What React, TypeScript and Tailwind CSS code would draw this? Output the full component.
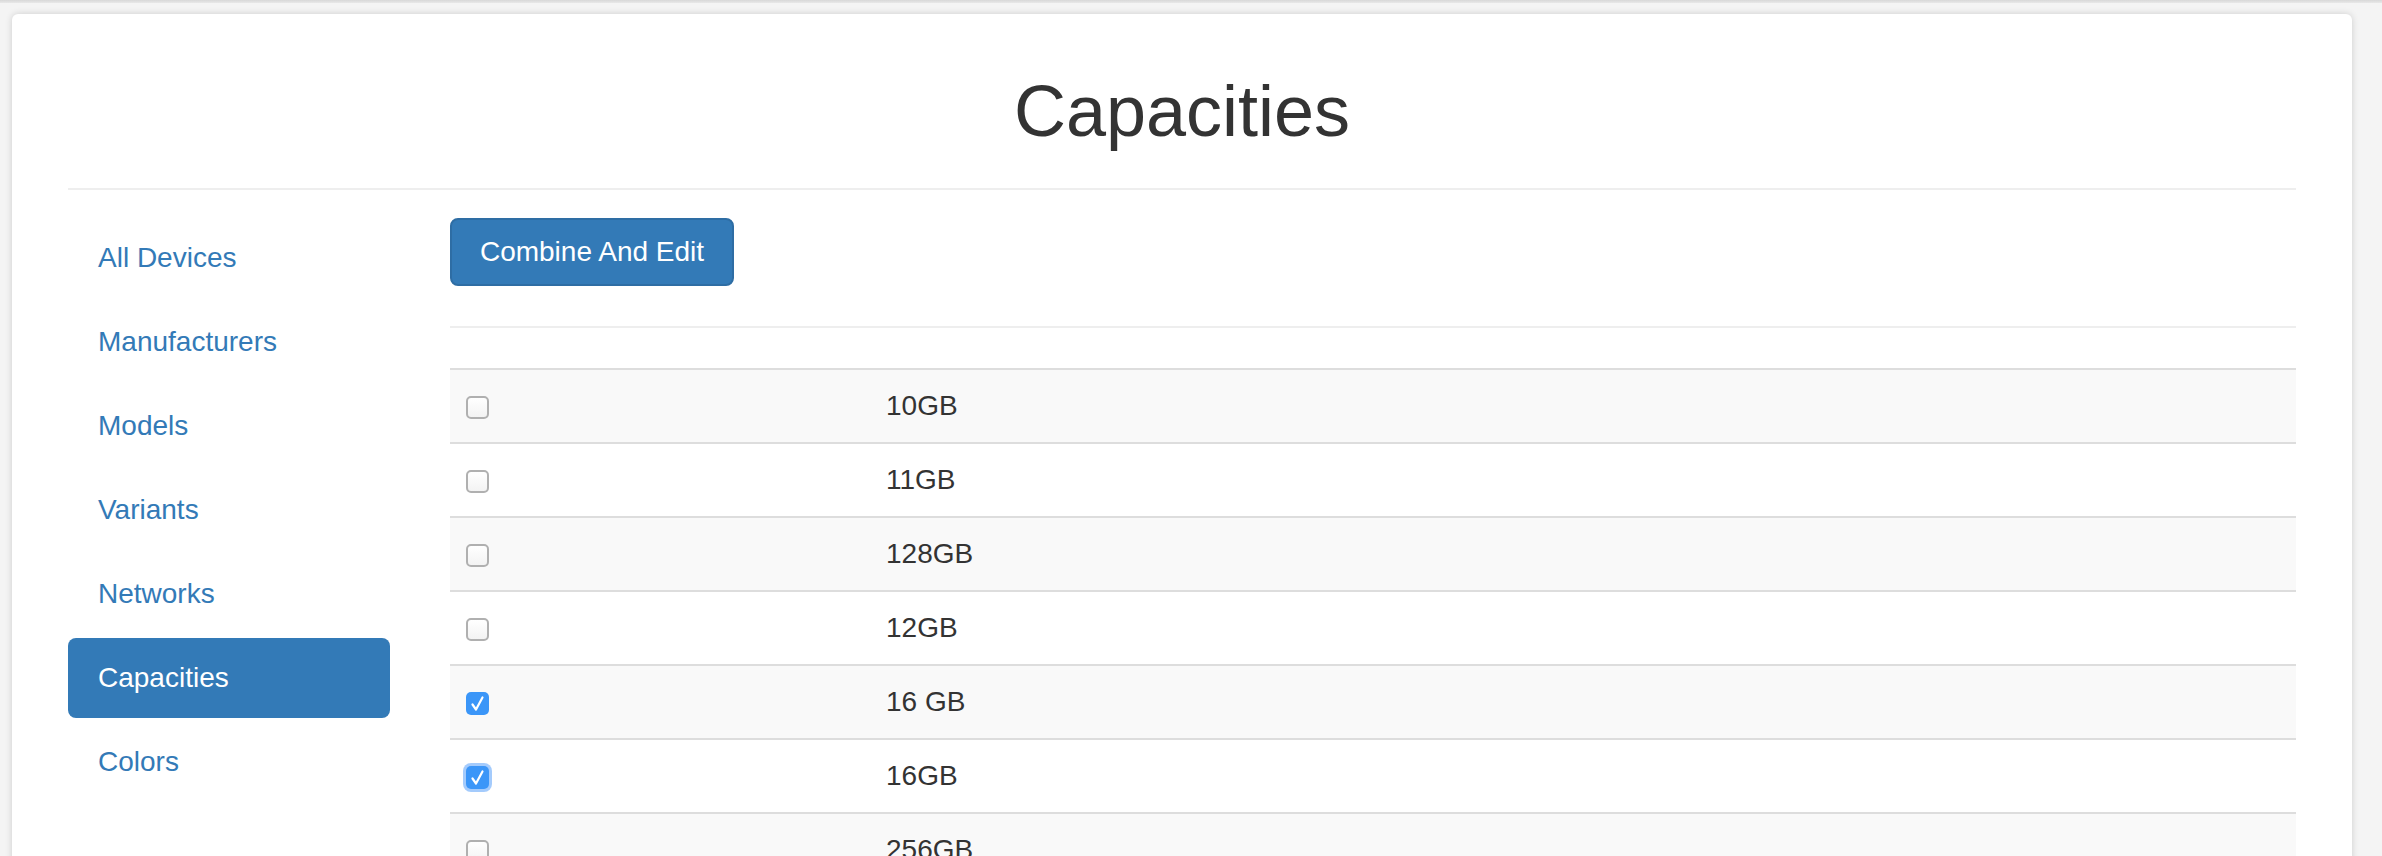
import React from "react";

const navItems = [
  "All Devices",
  "Manufacturers",
  "Models",
  "Variants",
  "Networks",
  "Capacities",
  "Colors",
];

type Row = { label: string; checked: boolean; focus?: boolean };

const rows: Row[] = [
  { label: "10GB", checked: false },
  { label: "11GB", checked: false },
  { label: "128GB", checked: false },
  { label: "12GB", checked: false },
  { label: "16 GB", checked: true },
  { label: "16GB", checked: true, focus: true },
  { label: "256GB", checked: false },
];

function Checkbox({ checked, focus }: { checked: boolean; focus?: boolean }) {
  if (checked) {
    return (
      <span
        className={
          focus
            ? "flex h-[23px] w-[23px] items-center justify-center rounded-[5px] bg-[#3b96f8] shadow-[0_0_0_3px_rgba(90,160,250,0.55)]"
            : "flex h-[23px] w-[23px] items-center justify-center rounded-[5px] bg-[#3b96f8]"
        }
      >
        <svg width="23" height="23" viewBox="0 0 23 23">
          <path
            d="M6.5 12.5 L10 17.5 L16.5 5.5"
            stroke="white"
            strokeWidth="2.2"
            fill="none"
            strokeLinecap="round"
            strokeLinejoin="round"
          />
        </svg>
      </span>
    );
  }
  return (
    <span className="block h-[23px] w-[23px] rounded-[5px] border-2 border-[#b0b0b0] bg-gradient-to-b from-white to-[#f3f3f3]" />
  );
}

export default function App() {
  return (
    <div className="h-[856px] overflow-hidden bg-[#f4f4f4] font-['Liberation_Sans',Arial,sans-serif]">
      <div className="h-[3px] bg-gradient-to-b from-[#d8d8d8] to-[#e8e8e8]" />
      <div className="pl-[12px] pr-[30px] pt-[11px]">
        <div className="min-h-[900px] rounded-[6px] bg-white px-[56px] pt-[58px] shadow-[0_0_7px_rgba(0,0,0,0.16)]">
          <h1 className="text-center text-[72px] font-normal leading-[79px] text-[#333333]">
            Capacities
          </h1>
          <div className="mt-[37px] h-[2px] bg-[#eeeeee]" />
          <div className="mt-[28px] flex gap-[60px]">
            <nav className="flex w-[322px] shrink-0 flex-col gap-[4px]">
              {navItems.map((item) =>
                item === "Capacities" ? (
                  <div
                    key={item}
                    className="flex h-[80px] items-center rounded-[8px] bg-[#337ab7] px-[30px] text-[28px] leading-[40px] text-white"
                  >
                    {item}
                  </div>
                ) : (
                  <div
                    key={item}
                    className="flex h-[80px] items-center rounded-[8px] px-[30px] text-[28px] leading-[40px] text-[#337ab7]"
                  >
                    {item}
                  </div>
                )
              )}
            </nav>
            <div className="min-w-0 flex-1">
              <button className="flex h-[68px] w-[284px] items-center justify-center rounded-[8px] border-2 border-[#2e6da4] bg-[#337ab7] text-[28px] leading-[40px] text-white">
                Combine And Edit
              </button>
              <div className="mt-[40px] h-[2px] bg-[#eeeeee]" />
              <div className="mt-[40px]">
                {rows.map((r, i) => (
                  <div
                    key={r.label}
                    className={
                      i % 2 === 0
                        ? "flex h-[74px] border-t-2 border-[#dddddd] bg-[#f9f9f9]"
                        : "flex h-[74px] border-t-2 border-[#dddddd] bg-white"
                    }
                  >
                    <div className="flex w-[420px] shrink-0 items-center pl-[16px] pt-[3px]">
                      <Checkbox checked={r.checked} focus={r.focus} />
                    </div>
                    <div className="flex items-center pl-[16px] text-[28px] leading-[40px] text-[#333333]">
                      {r.label}
                    </div>
                  </div>
                ))}
              </div>
            </div>
          </div>
        </div>
      </div>
    </div>
  );
}
